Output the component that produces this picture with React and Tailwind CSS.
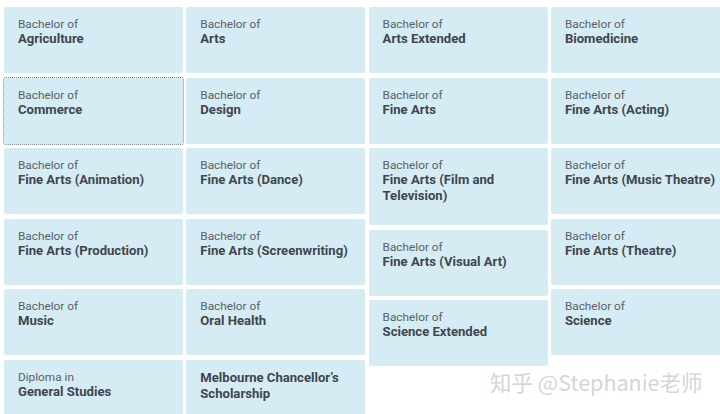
export default function App() {
  const cols = [
    [
      ["Bachelor of", "Agriculture"],
      ["Bachelor of", "Commerce", true],
      ["Bachelor of", "Fine Arts (Animation)"],
      ["Bachelor of", "Fine Arts (Production)"],
      ["Bachelor of", "Music"],
      ["Diploma in", "General Studies"],
    ],
    [
      ["Bachelor of", "Arts"],
      ["Bachelor of", "Design"],
      ["Bachelor of", "Fine Arts (Dance)"],
      ["Bachelor of", "Fine Arts (Screenwriting)"],
      ["Bachelor of", "Oral Health"],
      [null, "Melbourne Chancellor’s Scholarship"],
    ],
    [
      ["Bachelor of", "Arts Extended"],
      ["Bachelor of", "Fine Arts"],
      ["Bachelor of", "Fine Arts (Film and Television)"],
      ["Bachelor of", "Fine Arts (Visual Art)"],
      ["Bachelor of", "Science Extended"],
    ],
    [
      ["Bachelor of", "Biomedicine"],
      ["Bachelor of", "Fine Arts (Acting)"],
      ["Bachelor of", "Fine Arts (Music Theatre)"],
      ["Bachelor of", "Fine Arts (Theatre)"],
      ["Bachelor of", "Science"],
    ],
  ];
  return (
    <div
      className="relative w-[720px] h-[414px] overflow-hidden bg-white"
      style={{ fontFamily: "Roboto, 'Liberation Sans', sans-serif" }}
    >
      <div className="flex gap-[3.3px] pl-[4px] pt-[7px]">
        {cols.map((col, ci) => (
          <div key={ci} className="flex flex-col gap-[4.6px] w-[179px] shrink-0">
            {col.map(([label, title, focus], i) => (
              <div
                key={i}
                className={
                  "min-h-[66px] rounded-[2px] bg-[#d5ecf4] pt-[10px] pl-[14px] pr-[4px] pb-[21px] " +
                  (focus ? "outline outline-1 outline-dotted outline-[#7a7f84]" : "")
                }
              >
                {label && (
                  <div className="text-[11.8px] leading-[14px] text-[#5b6166]">
                    {label}
                  </div>
                )}
                <div className="text-[13.1px] leading-[16px] font-bold text-[#40464c]">
                  {title}
                </div>
              </div>
            ))}
          </div>
        ))}
      </div>
      <div
        className="absolute left-[490px] top-[368px] text-[21.5px] leading-[28px] text-[#d6d6d6] whitespace-nowrap"
        style={{
          fontFamily: "'Noto Sans CJK SC', 'Noto Sans', sans-serif",
          textShadow: "0 0 1px #fff, 0 0 1px #fff",
        }}
      >
        知乎 @Stephanie老师
      </div>
    </div>
  );
}
